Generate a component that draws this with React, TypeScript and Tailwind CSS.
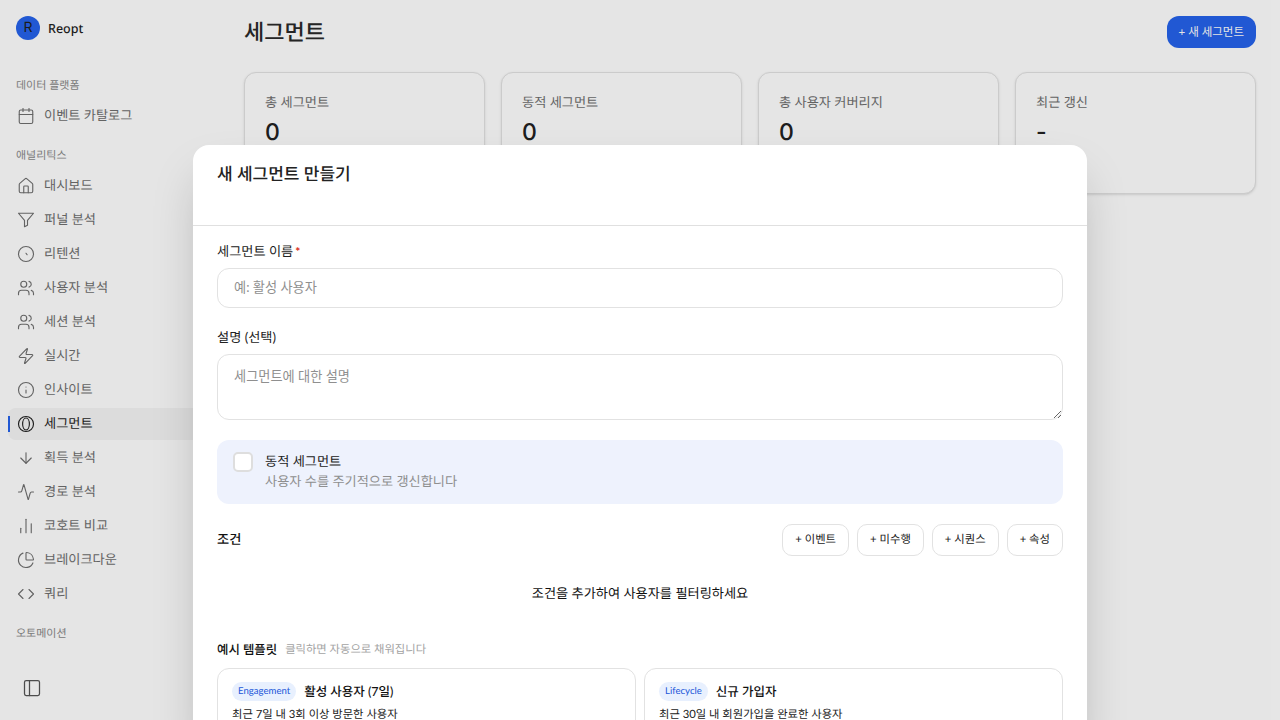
import { Activity, ArrowDown, Calendar, ChartNoAxesColumn, ChartPie, Code, Info, PanelLeft, Users, Zap, House } from "lucide-react";
import type { ReactNode } from "react";

const iconProps = { size: 18, strokeWidth: 1.5 };

function SegmentIcon() {
  return (
    <svg width="18" height="18" viewBox="0 0 24 24" fill="none" stroke="currentColor" strokeWidth="1.5">
      <circle cx="12" cy="12" r="10" />
      <ellipse cx="12" cy="12" rx="4.5" ry="8" />
    </svg>
  );
}

function FilterIcon() {
  return (
    <svg width="18" height="18" viewBox="0 0 24 24" fill="none" stroke="currentColor" strokeWidth="1.5" strokeLinejoin="round">
      <polygon points="2 3 22 3 14 12.5 14 19 10 21 10 12.5" />
    </svg>
  );
}

function ClockIcon() {
  return (
    <svg width="18" height="18" viewBox="0 0 24 24" fill="none" stroke="currentColor" strokeWidth="1.5" strokeLinecap="round">
      <circle cx="12" cy="12" r="10" />
      <path d="M12 11l1.5 2" />
    </svg>
  );
}

const analytics: { label: string; icon: ReactNode; active?: boolean }[] = [
  { label: "대시보드", icon: <House {...iconProps} /> },
  { label: "퍼널 분석", icon: <FilterIcon /> },
  { label: "리텐션", icon: <ClockIcon /> },
  { label: "사용자 분석", icon: <Users {...iconProps} /> },
  { label: "세션 분석", icon: <Users {...iconProps} /> },
  { label: "실시간", icon: <Zap {...iconProps} /> },
  { label: "인사이트", icon: <Info {...iconProps} /> },
  { label: "세그먼트", icon: <SegmentIcon />, active: true },
  { label: "획득 분석", icon: <ArrowDown {...iconProps} /> },
  { label: "경로 분석", icon: <Activity {...iconProps} /> },
  { label: "코호트 비교", icon: <ChartNoAxesColumn {...iconProps} /> },
  { label: "브레이크다운", icon: <ChartPie {...iconProps} /> },
  { label: "쿼리", icon: <Code {...iconProps} /> },
];

const stats = [
  { label: "총 세그먼트", value: "0" },
  { label: "동적 세그먼트", value: "0" },
  { label: "총 사용자 커버리지", value: "0" },
  { label: "최근 갱신", value: "-" },
];

const templates = [
  { tag: "Engagement", title: "활성 사용자 (7일)", desc: "최근 7일 내 3회 이상 방문한 사용자" },
  { tag: "Lifecycle", title: "신규 가입자", desc: "최근 30일 내 회원가입을 완료한 사용자" },
];

function NavItem({ label, icon, active }: { label: string; icon: ReactNode; active?: boolean }) {
  return (
    <div className={active ? "relative flex h-8 items-center gap-[9px] rounded-lg bg-[#f5f5f5] pl-[9px] pr-2 text-[13.2px] text-[#1f1f1f]" : "flex h-8 items-center gap-[9px] rounded-lg pl-[9px] pr-2 text-[13.2px] text-[#6f6f6f]"}>
      {active && <span className="absolute left-0 top-2 h-4 w-0.5 bg-[#2563eb]" />}
      {icon}
      <span>{label}</span>
    </div>
  );
}

function SectionLabel({ children }: { children: ReactNode }) {
  return <div className="flex h-4 items-center px-2 pt-0.5 text-[11px] text-[#8a8a8a]">{children}</div>;
}

function Sidebar() {
  return (
    <aside className="flex h-full w-[220px] shrink-0 flex-col px-2 pb-4 pt-4">
      <div className="flex h-6 items-center gap-2 px-2">
        <div className="flex h-6 w-6 items-center justify-center rounded-full bg-[#2563eb] font-['Inter'] text-sm text-[#1f1f1f]">R</div>
        <span className="pt-0.5 font-['Noto_Sans'] text-[12.5px] font-medium text-[#1f1f1f]">Reopt</span>
      </div>
      <div className="mt-[37px] flex flex-col gap-[7px]">
        <SectionLabel>데이터 플랫폼</SectionLabel>
        <NavItem label="이벤트 카탈로그" icon={<Calendar {...iconProps} />} />
      </div>
      <div className="mt-[15px] flex flex-col gap-[7px]">
        <SectionLabel>애널리틱스</SectionLabel>
        <div className="flex flex-col gap-0.5">
          {analytics.map((item) => (
            <NavItem key={item.label} {...item} />
          ))}
        </div>
      </div>
      <div className="mt-[15px]">
        <SectionLabel>오토메이션</SectionLabel>
      </div>
      <div className="mt-auto px-2 text-[#555555]">
        <div className="flex h-8 w-8 items-center justify-center">
          <PanelLeft size={20} strokeWidth={1.5} />
        </div>
      </div>
    </aside>
  );
}

function Field({ label, required, children }: { label: string; required?: boolean; children: ReactNode }) {
  return (
    <div className="flex flex-col gap-2">
      <label className="h-[18px] text-[13.2px] leading-[18px] text-[#222222]">
        {label}
        {required && <span className="ml-0.5 text-xs font-bold text-[#d92d20]">*</span>}
      </label>
      {children}
    </div>
  );
}

function Modal() {
  return (
    <div className="absolute left-[193px] top-[145px] w-[894px] rounded-t-2xl bg-white shadow-2xl">
      <div className="h-[81px] border-b border-[#e0e0e0] px-6 pt-[17px]">
        <h2 className="text-[17px] font-medium leading-6 text-[#222222]">새 세그먼트 만들기</h2>
      </div>
      <div className="flex flex-col px-6 pt-4">
        <Field label="세그먼트 이름" required>
          <input readOnly placeholder="예: 활성 사용자" className="h-10 w-full rounded-xl border border-[#e2e2e2] px-4 pb-0.5 text-[13.2px] outline-none placeholder:text-[#8f8f8f]" />
        </Field>
        <div className="mt-5">
          <Field label="설명 (선택)">
            <textarea readOnly placeholder="세그먼트에 대한 설명" className="block h-[66px] w-full rounded-xl border border-[#e2e2e2] px-4 py-3 text-[13.2px] outline-none placeholder:text-[#8f8f8f]" />
          </Field>
        </div>
        <div className="mt-5 flex h-16 gap-3 rounded-xl bg-[#eef2fd] px-4 pt-3">
          <div className="h-5 w-5 shrink-0 rounded-[5px] border-2 border-[#dedede] bg-white" />
          <div className="flex flex-col">
            <span className="h-[18px] text-[13.2px] leading-[18px] text-[#222222]">동적 세그먼트</span>
            <span className="mt-0.5 h-[18px] text-[13.2px] leading-[18px] text-[#8f8f8f]">사용자 수를 주기적으로 갱신합니다</span>
          </div>
        </div>
        <div className="mt-5 flex items-center justify-between">
          <span className="text-[13.2px] font-medium text-[#111111]">조건</span>
          <div className="flex gap-2">
            {["+ 이벤트", "+ 미수행", "+ 시퀀스", "+ 속성"].map((label) => (
              <div key={label} className="flex h-8 items-center rounded-[10px] border border-[#e2e2e2] px-3 text-[11.35px] text-[#222222]">
                {label}
              </div>
            ))}
          </div>
        </div>
        <div className="flex h-[75px] items-center justify-center text-[13.2px] text-[#111111]">조건을 추가하여 사용자를 필터링하세요</div>
        <div className="mt-[11px] flex h-4 items-center gap-2">
          <span className="text-[12.4px] font-medium text-[#111111]">예시 템플릿</span>
          <span className="text-[11.3px] text-[#a3a3a3]">클릭하면 자동으로 채워집니다</span>
        </div>
        <div className="mt-[10px] grid grid-cols-2 gap-2">
          {templates.map((t) => (
            <div key={t.tag} className="h-20 rounded-xl border border-[#e2e2e2] px-[14px] pt-3">
              <div className="flex items-center gap-2">
                <span className="flex h-[19px] items-center rounded-full bg-[#e8f0fe] px-1.5 pt-0.5 text-[9.6px] text-[#2257d9]">{t.tag}</span>
                <span className="pt-0.5 text-[12.5px] font-medium text-[#111111]">{t.title}</span>
              </div>
              <p className="mt-[5px] text-[11.3px] text-[#222222]">{t.desc}</p>
            </div>
          ))}
        </div>
      </div>
    </div>
  );
}

export default function App() {
  return (
    <div className="relative flex h-[720px] w-[1280px] overflow-hidden bg-white font-['Lato','Noto_Sans_CJK_KR',sans-serif] [text-rendering:geometricPrecision]">
      <Sidebar />
      <main className="flex-1 px-6 pt-4">
        <div className="flex h-8 items-center justify-between">
          <h1 className="pb-0.5 text-[22px] font-medium text-[#2a2a2a]">세그먼트</h1>
          <button className="h-8 rounded-xl bg-[#2563eb] px-3 text-[11.5px] text-white">+ 새 세그먼트</button>
        </div>
        <div className="mt-6 grid grid-cols-4 gap-4">
          {stats.map((s) => (
            <div key={s.label} className="h-[122px] rounded-xl border border-[#e2e2e2] bg-white p-5 shadow-sm">
              <div className="text-[13.2px] text-[#6f6f6f]">{s.label}</div>
              <div className="mt-0.5 font-['Inter'] text-[23px] font-medium text-[#222222]">{s.value}</div>
            </div>
          ))}
        </div>
      </main>
      <div className="absolute inset-0 bg-black/10" />
      <Modal />
    </div>
  );
}
